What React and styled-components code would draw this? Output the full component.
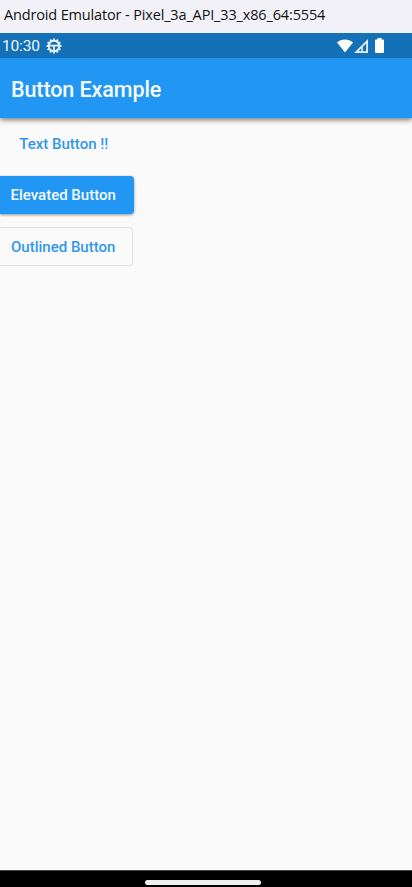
import React from "react";
import styled, { createGlobalStyle } from "styled-components";

const GlobalStyle = createGlobalStyle`
  * { box-sizing: border-box; }
  body { margin: 0; background: #fafafa; overflow: hidden; }
`;

const Screen = styled.div`
  display: flex;
  flex-direction: column;
  width: 412px;
  height: 887px;
  overflow: hidden;
  background: #fafafa;
  font-family: Roboto, sans-serif;
`;

const WindowTitle = styled.header`
  flex: none;
  height: 33px;
  padding-left: 4px;
  background: #f2f1f8;
  color: #111;
  font: 400 14.5px/30px "Open Sans", "Noto Sans", sans-serif;
  letter-spacing: -0.15px;
  white-space: nowrap;
`;

const StatusBar = styled.div`
  flex: none;
  z-index: 1;
  display: flex;
  align-items: center;
  justify-content: space-between;
  height: 25px;
  padding: 0 28px 0 2px;
  background: #1470b7;
  color: #f2f7fb;
`;

const StatusGroup = styled.div`
  display: flex;
  align-items: center;
  gap: ${(p) => p.$gap}px;
`;

const Clock = styled.span`
  width: 38px;
  padding-top: 2px;
  font-size: 15.5px;
  line-height: 23px;
  letter-spacing: -0.15px;
  white-space: nowrap;
`;

const Icon = styled.svg`
  display: block;
  flex: none;
`;

const AppBar = styled.div`
  flex: none;
  height: 60px;
  padding-left: 11px;
  background: #2296f3;
  box-shadow: 0 2px 5px rgba(0, 0, 0, 0.5);
  color: #f6fbff;
  font-size: 21.5px;
  font-weight: 500;
  line-height: 63px;
  letter-spacing: -0.09px;
  white-space: nowrap;
`;

const Content = styled.main`
  flex: 1;
  display: flex;
  flex-direction: column;
  align-items: flex-start;
  gap: 13px;
  padding-top: 7px;
`;

const BaseButton = styled.button`
  height: 38px;
  margin: 0;
  padding: 0;
  border: 0;
  background: transparent;
  color: #3297ec;
  font: 500 15px/38px Roboto, sans-serif;
  white-space: nowrap;
`;

const TextButton = styled(BaseButton)`
  padding-left: 19.3px;
`;

const ElevatedButton = styled(BaseButton)`
  width: 134px;
  padding-left: 10.5px;
  text-align: left;
  border-radius: 0 4px 4px 0;
  background: #2296f3;
  box-shadow: 0 1px 3px rgba(0, 0, 0, 0.42);
  color: #f4faff;
`;

const OutlinedButton = styled(BaseButton)`
  width: 133px;
  height: 39px;
  padding: 1px 0 0 11px;
  text-align: left;
  border: 1px solid #e1e1e1;
  border-left: 0;
  border-radius: 0 4px 4px 0;
  line-height: 37px;
`;

const NavigationBar = styled.footer`
  flex: none;
  display: flex;
  justify-content: center;
  height: 17px;
  padding: 9px 6px 0 0;
  border-top: 1px solid #454747;
  background: #000;
`;

const HomeHandle = styled.div`
  width: 116px;
  height: 5px;
  border-radius: 3px;
  background: #eee;
`;

const teeth = Array.from({ length: 12 }, (_, i) => i * 30);

function WheelIcon() {
  return (
    <Icon width="16" height="16" viewBox="0 0 16 16" fill="none" stroke="#e8f2f9">
      <circle cx="8" cy="8" r="5.3" strokeWidth="1.9" />
      {teeth.map((a) => (
        <path key={a} d="M8 .5V2.5" strokeWidth="1.9" transform={`rotate(${a} 8 8)`} />
      ))}
      <path d="M3 7.7H13M8 7.7V13" strokeWidth="1.7" />
    </Icon>
  );
}

function WifiIcon() {
  return (
    <Icon width="16" height="14" viewBox="0 0 16 14">
      <path d="M0 3.5Q3.3.4 8 .4T16 3.5L8 13.4Z" fill="#fff" />
    </Icon>
  );
}

function SignalIcon() {
  return (
    <Icon width="14" height="14" viewBox="0 0 14 14">
      <path fillRule="evenodd" d="M0 14 14 0V14ZM4.6 12.2H7.2V9.2ZM8.8 7.8V12.2H12.2V4.4Z" fill="#e3eff8" />
    </Icon>
  );
}

function BatteryIcon() {
  return (
    <Icon width="9" height="15" viewBox="0 0 9 15">
      <path d="M2.5 0h4v1.5H8q1 0 1 1V14q0 1-1 1H1q-1 0-1-1V2.5q0-1 1-1h1.5Z" fill="#fff" />
    </Icon>
  );
}

const CellularGroup = styled(StatusGroup)`
  margin-right: 4px;
`;

export default function App() {
  return (
    <>
      <GlobalStyle />
      <Screen>
        <WindowTitle>Android Emulator - Pixel_3a_API_33_x86_64:5554</WindowTitle>
        <StatusBar>
          <StatusGroup $gap={6}>
            <Clock>10:30</Clock>
            <WheelIcon />
          </StatusGroup>
          <StatusGroup $gap={3}>
            <CellularGroup $gap={1}>
              <WifiIcon />
              <SignalIcon />
            </CellularGroup>
            <BatteryIcon />
          </StatusGroup>
        </StatusBar>
        <AppBar>Button Example</AppBar>
        <Content>
          <TextButton>Text Button !!</TextButton>
          <ElevatedButton>Elevated Button</ElevatedButton>
          <OutlinedButton>Outlined Button</OutlinedButton>
        </Content>
        <NavigationBar>
          <HomeHandle />
        </NavigationBar>
      </Screen>
    </>
  );
}
